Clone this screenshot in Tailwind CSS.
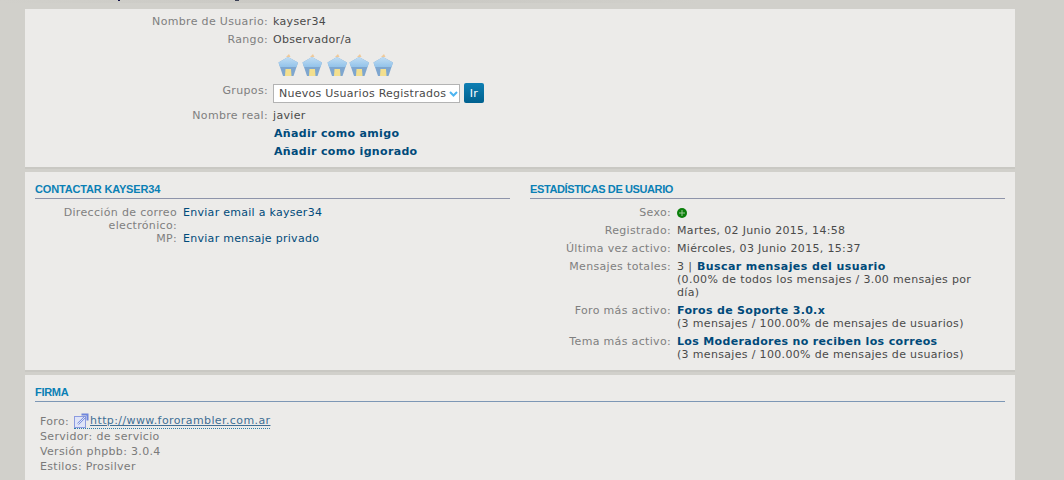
<!DOCTYPE html>
<html lang="en">
<head>
  <meta charset="UTF-8">
  <title>Perfil de kayser34</title>
  <script src="https://cdn.jsdelivr.net/npm/@tailwindcss/browser@4"></script>
</head>
<body class="bg-[#d1d0cb] font-['DejaVu_Sans',sans-serif] text-[11px] leading-[13px] tracking-[0.33px] text-[#4a4a4a] h-[480px] overflow-hidden">
  <!-- clipped strip above the first panel -->
  <div class="relative h-[9px] overflow-hidden">
    <div class="h-[3px] w-[700px] bg-gradient-to-r from-[#d1d0cb] via-[#c8c7c2] to-[#d1d0cb]"></div>
    <div class="absolute top-0 left-[118px] w-[2px] h-[1px] bg-[#12124a]"></div>
    <div class="absolute top-0 left-[235px] w-[4px] h-[1px] bg-[#3a3f55]"></div>
  </div>

  <div class="mx-[25px] w-[990px]">
    <!-- profile panel -->
    <section class="bg-[#ecebe9] h-[160px] pt-[6px] mb-[3px] border-b-2 border-[#c9c8c3]">
      <div class="flex h-[18px]">
        <div class="w-[243px] text-right text-[#7f7f7f]">Nombre de Usuario:</div>
        <div class="ml-[5px]">kayser34</div>
      </div>
      <div class="flex h-[18px]">
        <div class="w-[243px] text-right text-[#7f7f7f]">Rango:</div>
        <div class="ml-[5px]">Observador/a</div>
      </div>
      <!-- rank stars -->
      <div class="flex h-[33px] pl-[253px] pt-[3px]">
        <svg width="118" height="24" viewBox="0 0 118 24">
          <defs>
            <linearGradient id="roof" x1="0" y1="0" x2="0" y2="1">
              <stop offset="0" stop-color="#c2def4"></stop>
              <stop offset="1" stop-color="#93c3ea"></stop>
            </linearGradient>
            <g id="lantern">
              <path d="M8 3 L11 0 L12.500 3 Z" fill="#eec99a"></path>
              <path d="M10 3 L20 8.500 L15.500 22 L5 22 L0.500 8.500 Z" fill="#7ea6cf"></path>
              <path d="M10 3 L20 8.500 L18.500 13 L2 13 L0.500 8.500 Z" fill="url(#roof)"></path>
              <path d="M7.500 15 L13 15 L13.500 22 L7 22 Z" fill="#f3df8e"></path>
            </g>
          </defs>
          <use href="#lantern" x="0"></use>
          <use href="#lantern" x="24"></use>
          <use href="#lantern" x="49"></use>
          <use href="#lantern" x="71"></use>
          <use href="#lantern" x="95"></use>
        </svg>
      </div>
      <div class="flex h-[25px]">
        <div class="w-[243px] text-right text-[#7f7f7f]">Grupos:</div>
        <div class="ml-[5px] flex items-start gap-[4px]">
          <div class="w-[187px] h-[19px] bg-white border border-[#b3b3b3] flex items-center justify-between pl-[5px] pr-[1px] text-[#4a4a4a]">
            <span class="whitespace-nowrap tracking-[0.26px]">Nuevos Usuarios Registrados</span>
            <svg width="9" height="6" viewBox="0 0 9 6"><path d="M1 1 L4.500 4.500 L8 1" fill="none" stroke="#4db4f0" stroke-width="2"></path></svg>
          </div>
          <button class="w-[20px] h-[20px] -mt-[1px] rounded-[2px] bg-gradient-to-b from-[#0f7fb3] to-[#00618f] text-white text-center">Ir</button>
        </div>
      </div>
      <div class="flex h-[18px]">
        <div class="w-[243px] text-right text-[#7f7f7f]">Nombre real:</div>
        <div class="ml-[5px]">javier</div>
      </div>
      <div class="h-[18px] pl-[249px] font-bold text-[#004a7a]">Añadir como amigo</div>
      <div class="h-[18px] pl-[249px] font-bold text-[#004a7a]">Añadir como ignorado</div>
    </section>

    <!-- contact + stats panel -->
    <section class="bg-[#ecebe9] h-[200px] mb-[3px] pt-[11px] px-[10px] border-b-2 border-[#c9c8c3] flex gap-[20px]">
      <div class="w-[475px]">
        <h3 class="font-['Liberation_Sans',sans-serif] font-bold text-[11px] leading-[13px] tracking-[-0.17px] text-[#0a80b5] h-[16px] border-b border-[#8e94aa] uppercase">Contactar kayser34</h3>
        <div class="grid grid-cols-[142px_1fr] gap-x-[6px] pt-[7px]">
          <div class="text-right text-[#7f7f7f]">Dirección de correo electrónico:</div>
          <div class="text-[#004a7a] tracking-[0.28px]">Enviar email a kayser34</div>
          <div class="text-right text-[#7f7f7f]">MP:</div>
          <div class="text-[#004a7a] tracking-[0.28px]">Enviar mensaje privado</div>
        </div>
      </div>
      <div class="w-[475px]">
        <h3 class="font-['Liberation_Sans',sans-serif] font-bold text-[11px] leading-[13px] tracking-[-0.39px] text-[#0a80b5] h-[16px] border-b border-[#8e94aa] uppercase">Estadísticas de usuario</h3>
        <div class="grid grid-cols-[141px_310px] gap-x-[6px] gap-y-[5px] pt-[7px]">
          <div class="text-right text-[#7f7f7f]">Sexo:</div>
          <div class="pt-[2px]">
            <svg width="10" height="10" viewBox="0 0 10 10"><circle cx="5" cy="5" r="5" fill="#0b7f0b"></circle><path d="M5 2 V8 M2 5 H8" stroke="#9cc896" stroke-width="1"></path></svg>
          </div>
          <div class="text-right text-[#7f7f7f]">Registrado:</div>
          <div>Martes, 02 Junio 2015, 14:58</div>
          <div class="text-right text-[#7f7f7f]">Última vez activo:</div>
          <div>Miércoles, 03 Junio 2015, 15:37</div>
          <div class="text-right text-[#7f7f7f]">Mensajes totales:</div>
          <div>3 | <span class="ml-[1px] font-bold tracking-[0.41px] text-[#004a7a]">Buscar mensajes del usuario</span><br>(0.00% de todos los mensajes / 3.00 mensajes por día)</div>
          <div class="text-right text-[#7f7f7f]">Foro más activo:</div>
          <div><span class="font-bold text-[#004a7a]">Foros de Soporte 3.0.x</span><br>(3 mensajes / 100.00% de mensajes de usuarios)</div>
          <div class="text-right text-[#7f7f7f]">Tema más activo:</div>
          <div><span class="font-bold text-[#004a7a]">Los Moderadores no reciben los correos</span><br>(3 mensajes / 100.00% de mensajes de usuarios)</div>
        </div>
      </div>
    </section>

    <!-- signature panel -->
    <section class="bg-[#ecebe9] h-[110px] pt-[11px] px-[10px]">
      <h3 class="font-['Liberation_Sans',sans-serif] font-bold text-[11px] leading-[13px] tracking-[-0.3px] text-[#0a80b5] h-[16px] border-b border-[#7d97b5] uppercase">Firma</h3>
      <div class="pl-[5px] pt-[11px] text-[#7a7a7a] leading-[15px]">
        <div class="flex items-center h-[16px]">
          <span>Foro:</span>
          <span class="ml-[5px] inline-flex items-center border-b border-dotted border-[#2f7fa8] text-[#3f6f95]">
            <svg class="mr-[1px]" width="15" height="15" viewBox="0 0 15 15"><rect x="0.500" y="3.500" width="11" height="11" fill="#dfe4f7" stroke="#8c9be0"></rect><path d="M4 11 L11 4 M7.500 1.500 H13.500 V7.500" fill="none" stroke="#6f86dc" stroke-width="2"></path><path d="M4 11 L11 4" stroke="#ffffff" stroke-width="0.800"></path></svg>
            <span class="underline tracking-[0.4px]">http://www.fororambler.com.ar</span>
          </span>
        </div>
        <div>Servidor: de servicio</div>
        <div>Versión phpbb: 3.0.4</div>
        <div>Estilos: Prosilver</div>
      </div>
    </section>
  </div>
</body>
</html>
